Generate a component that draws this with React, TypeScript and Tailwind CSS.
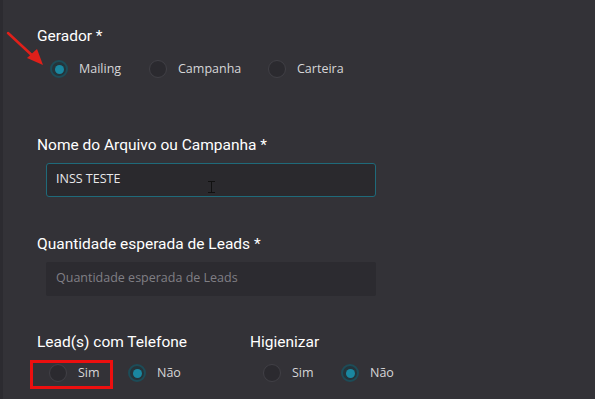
import React from 'react';

const Radio: React.FC<{ label: string; checked?: boolean; className?: string }> = ({ label, checked, className }) => (
  <label className={`flex items-center gap-[11px] ${className ?? ''}`}>
    {checked ? (
      <span className="w-[18px] h-[18px] rounded-full border-2 border-[#1d4c58] bg-[#25343a] flex items-center justify-center">
        <span className="w-[9px] h-[9px] rounded-full bg-[#1a87a0]" />
      </span>
    ) : (
      <span className="w-[18px] h-[18px] rounded-full border border-[#414046] bg-[#2b2a2f]" />
    )}
    <span className="text-[12.5px] text-[#d6d6d8] font-['Open_Sans',sans-serif]">{label}</span>
  </label>
);

const App: React.FC = () => {
  return (
    <div className="relative w-[595px] h-[399px] overflow-hidden bg-[#333237] font-['Roboto',sans-serif] border-l-[3px] border-[#2c2b30]">
      {/* red arrow annotation */}
      <svg className="absolute left-0 top-0" width="60" height="80" viewBox="0 0 60 80">
        <line x1="5" y1="33" x2="33" y2="59" stroke="#e0201a" strokeWidth="2.5" strokeLinecap="round" />
        <polygon points="40,65 24,58 34,49" fill="#e0201a" />
      </svg>

      <div className="pl-[34px] pt-[27px] flex flex-col">
        <div className="text-[15.5px] text-white leading-[18px]">Gerador *</div>
        <div className="flex items-center mt-[15px] ml-[13px]">
          <Radio label="Mailing" checked className="w-[99px]" />
          <Radio label="Campanha" className="w-[119px]" />
          <Radio label="Carteira" />
        </div>

        <div className="text-[15.5px] text-white leading-[18px] mt-[57px]">Nome do Arquivo ou Campanha *</div>
        <div className="mt-[9px] ml-[9px] w-[330px] h-[34px] rounded-[3px] border border-[#1f6a7a] bg-[#2a292d] flex items-center px-[9px] relative">
          <span className="text-[12.5px] text-[#e8e8ea] font-['Open_Sans',sans-serif]">INSS TESTE</span>
          <span className="absolute left-[164px] top-[17px] w-[1px] h-[12px] bg-[#111]" />
          <span className="absolute left-[161px] top-[17px] w-[7px] h-[1px] bg-[#111]" />
          <span className="absolute left-[161px] top-[28px] w-[7px] h-[1px] bg-[#111]" />
        </div>

        <div className="text-[15.5px] text-white leading-[18px] mt-[38px]">Quantidade esperada de Leads *</div>
        <div className="mt-[9px] ml-[9px] w-[330px] h-[34px] rounded-[2px] bg-[#2c2b30] flex items-center px-[10px]">
          <span className="text-[12.5px] text-[#807f85] font-['Open_Sans',sans-serif]">Quantidade esperada de Leads</span>
        </div>

        <div className="flex mt-[37px]">
          <div className="w-[213px]">
            <div className="text-[15.5px] text-white leading-[18px]">Lead(s) com Telefone</div>
            <div className="flex items-center mt-[13px] ml-[12px]">
              <Radio label="Sim" className="w-[79px]" />
              <Radio label="Não" checked />
            </div>
          </div>
          <div>
            <div className="text-[15.5px] text-white leading-[18px]">Higienizar</div>
            <div className="flex items-center mt-[13px] ml-[13px]">
              <Radio label="Sim" className="w-[78px]" />
              <Radio label="Não" checked />
            </div>
          </div>
        </div>
      </div>

      {/* red highlight box */}
      <div className="absolute left-[27px] top-[360px] w-[83px] h-[29px] border-[3px] border-[#ec0f0f]" />
    </div>
  );
};

export default App;
